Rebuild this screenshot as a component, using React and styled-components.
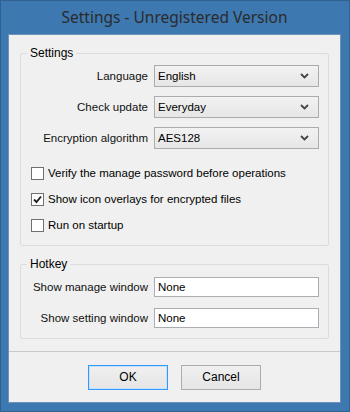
import React from "react";
import styled, { createGlobalStyle } from "styled-components";

const GlobalStyle = createGlobalStyle`
  html, body {
    margin: 0;
    padding: 0;
  }
  body {
    font-family: "Liberation Sans", Arial, sans-serif;
    font-size: 11.5px;
    color: #000;
  }
`;

const Window = styled.div`
  width: 350px;
  height: 412px;
  box-sizing: border-box;
  background: #3d78b0;
  border: 1px solid #2f6290;
  display: flex;
  flex-direction: column;
  padding: 0 8px 8px 7px;
`;

const TitleBar = styled.div`
  height: 33px;
  display: flex;
  align-items: center;
  justify-content: center;
  font-family: "Noto Sans", sans-serif;
  font-size: 15.5px;
  color: #2b2b2b;
  padding-bottom: 1px;
  box-sizing: border-box;
`;

const Client = styled.div`
  flex: 1;
  background: #f0f0f0;
  border: 1px solid #6d93b8;
  display: flex;
  flex-direction: column;
  box-sizing: border-box;
`;

const Body = styled.div`
  flex: 1;
  padding: 10px 11px 0 11px;
  display: flex;
  flex-direction: column;
  gap: 10px;
`;

const Group = styled.fieldset`
  margin: 0;
  padding: ${p => p.$top || 4}px 9px 10px 0;
  border: 1px solid #dcdcdc;
  border-radius: 2px;
  min-width: 0;
`;

const Legend = styled.legend`
  margin-left: 6px;
  padding: 0 3px;
  line-height: 16px;
  font-size: 12px;
`;

const Rows = styled.div`
  display: grid;
  grid-template-columns: 127px 165px;
  column-gap: 6px;
  row-gap: ${p => p.$gap}px;
  align-items: center;
`;

const Label = styled.label`
  text-align: right;
  white-space: nowrap;
  color: #111;
`;

const Select = styled.div`
  height: 22px;
  box-sizing: border-box;
  border: 1px solid #acacac;
  background: linear-gradient(#f2f2f2, #e6e6e6);
  display: flex;
  align-items: center;
  justify-content: space-between;
  padding: 0 9px 0 3px;
`;

const Input = styled.div`
  height: 20px;
  box-sizing: border-box;
  border: 1px solid #abadb3;
  background: #fff;
  display: flex;
  align-items: center;
  padding: 0 3px;
`;

const Checks = styled.div`
  display: flex;
  flex-direction: column;
  gap: 6px;
  margin: 14px 0 0 10px;
`;

const CheckRow = styled.div`
  height: 20px;
  display: flex;
  align-items: center;
  gap: 4px;
`;

const Box = styled.span`
  width: 13px;
  height: 13px;
  box-sizing: border-box;
  border: 1px solid #707070;
  background: #fff;
  display: flex;
  align-items: center;
  justify-content: center;
`;

const Footer = styled.div`
  height: 50px;
  border-top: 1px solid #c9c9c9;
  display: flex;
  align-items: center;
  justify-content: center;
  gap: 13px;
`;

const Button = styled.button`
  width: 80px;
  height: 25px;
  font: inherit;
  font-size: 12px;
  color: #000;
  border: 1px solid ${p => (p.$default ? "#3399ff" : "#acacac")};
  box-shadow: ${p => (p.$default ? "inset 0 0 0 1px #c5e3ff" : "none")};
  background: linear-gradient(#f0f0f0, #e5e5e5);
  padding: 0;
`;

const Chevron = () => (
  <svg width="9" height="6" viewBox="0 0 9 6">
    <path d="M1 1 L4.5 4.5 L8 1" fill="none" stroke="#444" strokeWidth="1.8" />
  </svg>
);

const Tick = () => (
  <svg width="9" height="9" viewBox="0 0 9 9">
    <path d="M1 4.5 L3.5 7 L8 1.5" fill="none" stroke="#222" strokeWidth="1.9" />
  </svg>
);

const options = [
  ["Language", "English"],
  ["Check update", "Everyday"],
  ["Encryption algorithm", "AES128"]
];

const checks = [
  ["Verify the manage password before operations", false],
  ["Show icon overlays for encrypted files", true],
  ["Run on startup", false]
];

const hotkeys = ["Show manage window", "Show setting window"];

export default function App() {
  return (
    <>
      <GlobalStyle />
      <Window>
        <TitleBar>Settings - Unregistered Version</TitleBar>
        <Client>
          <Body>
            <Group>
              <Legend>Settings</Legend>
              <Rows $gap={9}>
                {options.map(([label, value]) => (
                  <React.Fragment key={label}>
                    <Label>{label}</Label>
                    <Select>
                      <span>{value}</span>
                      <Chevron />
                    </Select>
                  </React.Fragment>
                ))}
              </Rows>
              <Checks>
                {checks.map(([text, on]) => (
                  <CheckRow key={text}>
                    <Box>{on && <Tick />}</Box>
                    <span>{text}</span>
                  </CheckRow>
                ))}
              </Checks>
            </Group>
            <Group $top={5}>
              <Legend>Hotkey</Legend>
              <Rows $gap={11}>
                {hotkeys.map(label => (
                  <React.Fragment key={label}>
                    <Label>{label}</Label>
                    <Input>None</Input>
                  </React.Fragment>
                ))}
              </Rows>
            </Group>
          </Body>
          <Footer>
            <Button $default>OK</Button>
            <Button>Cancel</Button>
          </Footer>
        </Client>
      </Window>
    </>
  );
}
